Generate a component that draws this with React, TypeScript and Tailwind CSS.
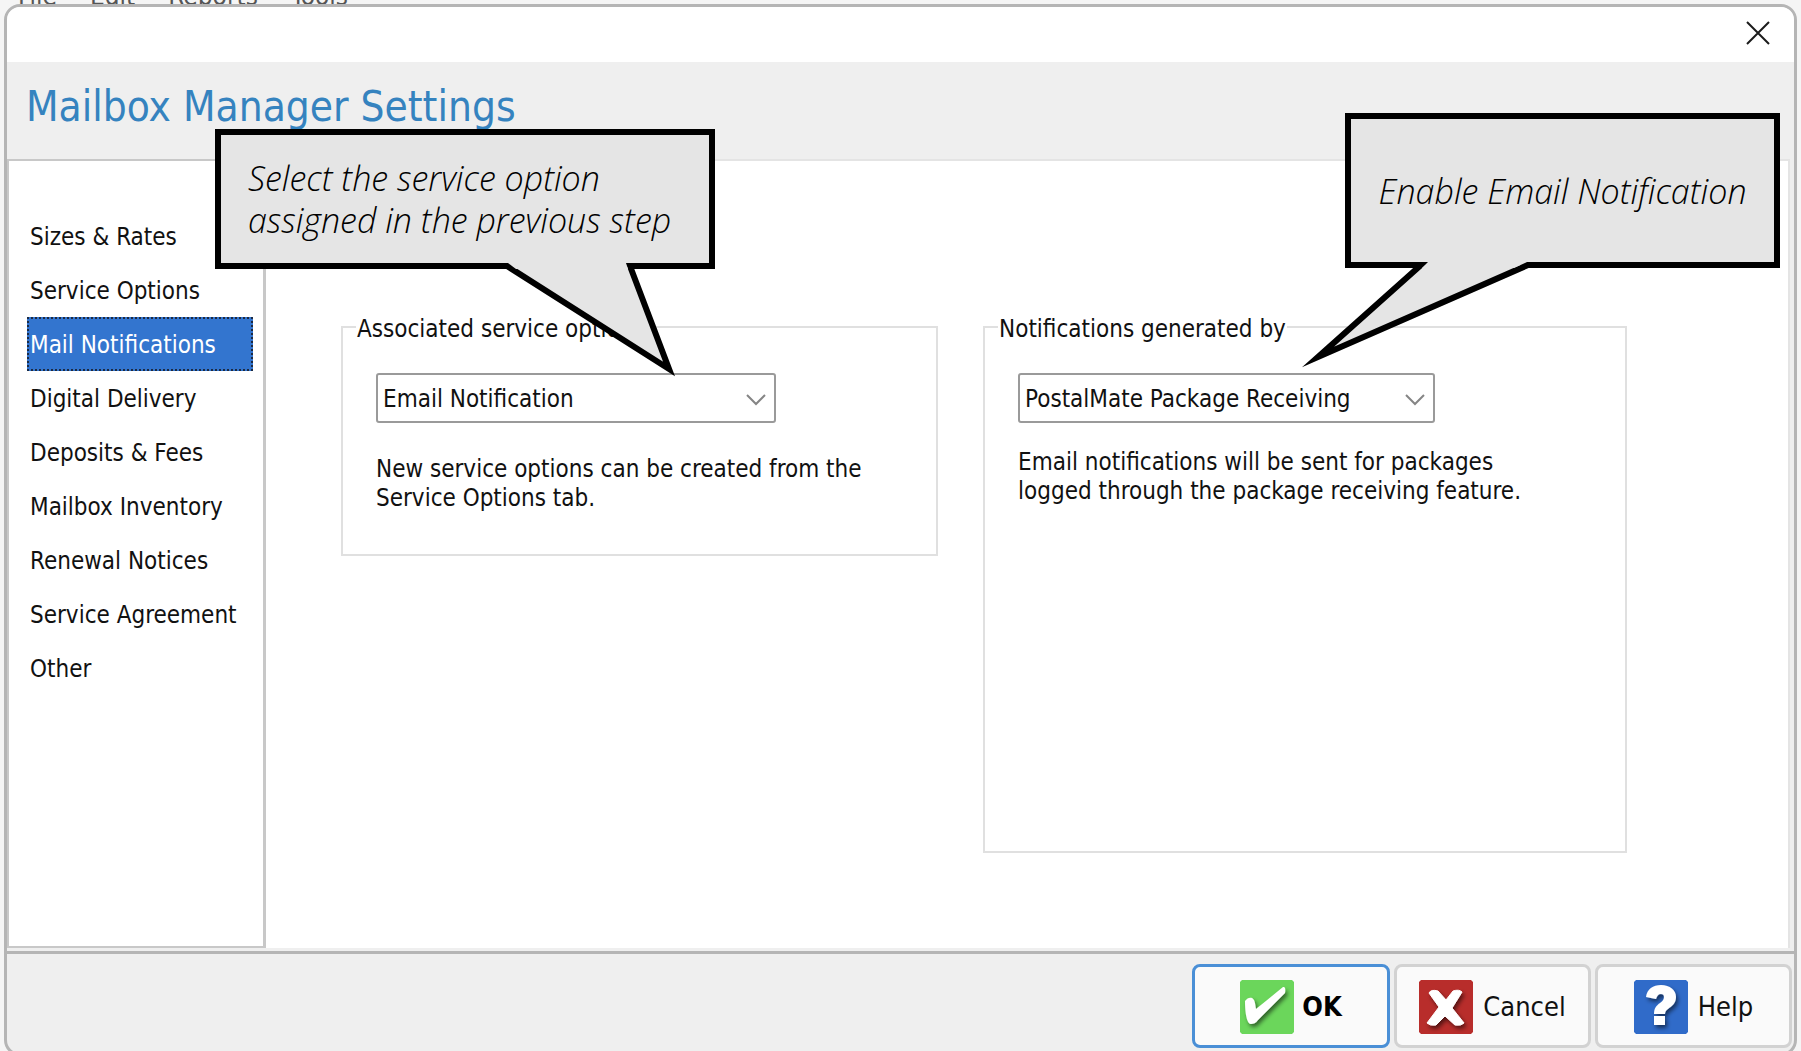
import { useState } from "react";
import type { ReactNode } from "react";

const NAV_ITEMS = [
  "Sizes & Rates",
  "Service Options",
  "Mail Notifications",
  "Digital Delivery",
  "Deposits & Fees",
  "Mailbox Inventory",
  "Renewal Notices",
  "Service Agreement",
  "Other",
];

function OkIcon() {
  return (
    <svg width="54" height="54" viewBox="0 0 54 54" aria-hidden="true" className="shrink-0">
      <defs>
        <filter id="icon-shadow" x="-20%" y="-20%" width="150%" height="150%">
          <feDropShadow dx="2" dy="3" stdDeviation="2" floodColor="#000" floodOpacity="0.55" />
        </filter>
      </defs>
      <path d="M2 0h50l2 2v50l-2 2H2l-2-2V2z" fill="#6bd65b" />
      <path
        d="M5 21c2-3 5-4 7-3 3 2 3 5 4 11L43 7q3-1 2 6L18 40c-2 3-5 4-7 4-4 0-6-10-6-23z"
        fill="#fff"
        filter="url(#icon-shadow)"
      />
    </svg>
  );
}

function CancelIcon() {
  return (
    <svg width="54" height="54" viewBox="0 0 54 54" aria-hidden="true" className="shrink-0">
      <path d="M2 0h50l2 2v50l-2 2H2l-2-2V2z" fill="#b82d2b" />
      <path
        d="M10 13q2-4 9-2l8 9 7-9q6-2 9 1l-10 16 12 15q-3 3-9 2L26 36l-9 9q-6 1-9-2l12-16z"
        fill="#fff"
        stroke="#fff"
        strokeLinejoin="round"
        filter="url(#icon-shadow)"
      />
    </svg>
  );
}

function HelpIcon() {
  return (
    <svg width="54" height="54" viewBox="0 0 54 54" aria-hidden="true" className="shrink-0">
      <path d="M2 0h50l2 2v50l-2 2H2l-2-2V2z" fill="#306bc9" />
      <g filter="url(#icon-shadow)" fill="#fff">
        <path d="M12 17C13 9 19 5 27 5c9 0 15 5 15 12 0 6-4 9-8 12-2 1-3 3-3 5H20c0-6 2-8 6-11 3-2 4-4 4-6s-1-3-3-3c-3 0-4 2-5 5z" />
        <path d="M20 36h11v9H20z" />
      </g>
    </svg>
  );
}

type ComboProps = {
  labelledBy: string;
  width: string;
  options: string[];
};

function Combo({ labelledBy, width, options }: ComboProps) {
  return (
    <div className={`relative ${width}`}>
      <select
        aria-labelledby={labelledBy}
        className="h-[50px] w-full appearance-none rounded-[3px] border-2 border-[#9a9a9a] bg-white pt-0.5 pr-12 pl-[5px] text-[#111]"
      >
        {options.map((option) => (
          <option key={option}>{option}</option>
        ))}
      </select>
      <svg
        viewBox="0 0 20 12"
        aria-hidden="true"
        className="pointer-events-none absolute top-[21px] right-[10px] h-3 w-5"
      >
        <path d="M1 1l9 9 9-9" fill="none" stroke="#858585" strokeWidth="2" />
      </svg>
    </div>
  );
}

type GroupProps = {
  id: string;
  title: string;
  className: string;
  children: ReactNode;
};

function Group({ id, title, className, children }: GroupProps) {
  return (
    <fieldset className={`border-2 border-[#e0e0e0] px-[33px] ${className}`}>
      <legend id={id} className="-ml-5 px-px pt-1 leading-7">
        {title}
      </legend>
      <div className="pt-[30px]">{children}</div>
    </fieldset>
  );
}

const calloutText =
  "border-[6px] border-black bg-[#e5e5e5] font-['Open_Sans',sans-serif] text-[34px] font-light leading-[42px] text-black italic";

export default function App() {
  const [active, setActive] = useState("Mail Notifications");

  return (
    <div className="h-screen overflow-hidden bg-[#f5f5f5] px-1 font-['DejaVu_Sans_Condensed','DejaVu_Sans',sans-serif] text-[24px] text-[#111]">
      <div className="flex h-1 items-end gap-[33px] overflow-hidden pl-[14px] text-[26px] leading-4 text-[#555]">
        <span>File</span>
        <span>Edit</span>
        <span>Reports</span>
        <span>Tools</span>
      </div>

      <main className="flex h-[calc(100vh+1px)] flex-col overflow-hidden rounded-[16px] border-[3px] border-[#b5b5b5] bg-[#efefef]">
        <div className="flex h-[55px] shrink-0 items-center justify-end bg-white pr-5 pb-1">
          <button type="button" aria-label="Close" className="p-1">
            <svg width="24" height="24" viewBox="0 0 24 24" aria-hidden="true">
              <path d="M1 1l22 22M23 1L1 23" fill="none" stroke="#1b1b1b" strokeWidth="2" />
            </svg>
          </button>
        </div>

        <header className="flex h-[97px] shrink-0 items-center pb-2 pl-[19px]">
          <h1 className="text-[42px] text-[#3583bf]">Mailbox Manager Settings</h1>
        </header>

        <div className="mb-[3px] flex min-h-0 flex-1">
          <nav
            aria-label="Settings sections"
            className="w-[259px] shrink-0 border-2 border-r-[3px] border-[#c8c8c8] bg-white pt-12 pr-[10px] pl-[18px]"
          >
            <ul>
              {NAV_ITEMS.map((item) => (
                <li key={item}>
                  <button
                    type="button"
                    onClick={() => setActive(item)}
                    aria-current={item === active ? "page" : undefined}
                    className={
                      item === active
                        ? "block h-[54px] w-full border-2 border-dotted border-[#1b2a44] bg-[#3375cf] pt-0.5 pl-px text-left whitespace-nowrap text-white"
                        : "block h-[54px] w-full border-2 border-transparent pt-0.5 pl-px text-left whitespace-nowrap"
                    }
                  >
                    {item}
                  </button>
                </li>
              ))}
            </ul>
          </nav>

          <section
            aria-label="Mail Notifications"
            className="mr-1 flex flex-1 items-start gap-[45px] border-t-2 border-r-2 border-[#e4e4e4] bg-white pt-[150px] pr-[161px] pl-[75px]"
          >
            <div className="relative min-w-0 flex-[598]">
              <Group id="service-option" title="Associated service option" className="h-[245px]">
                <Combo
                  labelledBy="service-option"
                  width="w-[400px]"
                  options={["Email Notification", "Text Notification"]}
                />
                <p className="mt-8 leading-[29px]">
                  New service options can be created from the Service Options tab.
                </p>
              </Group>
              <div className="absolute -top-[182px] -left-[126px] w-[500px]">
                <p className={`${calloutText} flex h-[140px] items-center pr-4 pl-[27px]`}>
                  Select the service option assigned in the previous step
                </p>
                <svg
                  width="220"
                  height="130"
                  viewBox="0 0 220 130"
                  aria-hidden="true"
                  className="absolute top-[134px] left-[270px]"
                >
                  <path
                    d="M10 3H22L184 106 145 3H160"
                    fill="#e5e5e5"
                    stroke="#000"
                    strokeWidth="6"
                    strokeMiterlimit="20"
                  />
                  <path d="M23 0H141L143 6H31z" fill="#e5e5e5" />
                </svg>
              </div>
            </div>

            <div className="relative min-w-0 flex-[645]">
              <Group id="generated-by" title="Notifications generated by" className="h-[542px]">
                <Combo
                  labelledBy="generated-by"
                  width="w-[417px]"
                  options={["PostalMate Package Receiving", "Manual Entry"]}
                />
                <p className="mt-[25px] max-w-[520px] leading-[29px]">
                  Email notifications will be sent for packages logged through the package receiving feature.
                </p>
              </Group>
              <div className="absolute -top-[198px] left-[362px] w-[435px]">
                <p className={`${calloutText} flex h-[155px] items-center justify-center whitespace-nowrap`}>
                  Enable Email Notification
                </p>
                <svg
                  width="250"
                  height="120"
                  viewBox="0 0 250 120"
                  aria-hidden="true"
                  className="absolute top-[149px] -left-[45px]"
                >
                  <path
                    d="M100 3H121L18 95 228 3H240"
                    fill="#e5e5e5"
                    stroke="#000"
                    strokeWidth="6"
                    strokeMiterlimit="20"
                  />
                  <path d="M128 0H227L214 6H122z" fill="#e5e5e5" />
                </svg>
              </div>
            </div>
          </section>
        </div>

        <footer className="flex shrink-0 items-start justify-end gap-1 border-t-[3px] border-[#b5b5b5] pt-[10px] pr-[2px] pb-[5px] text-[27px]">
          <button
            type="button"
            className="flex h-[84px] w-[198px] items-center justify-center gap-2 rounded-lg border-[3px] border-[#4a8fd6] bg-[#fafafa] pt-0.5 font-bold text-black"
          >
            <OkIcon />
            OK
          </button>
          <button
            type="button"
            className="flex h-[84px] w-[197px] items-center justify-center gap-[10px] rounded-lg border-[3px] border-[#d2d2d2] bg-[#fafafa] pt-0.5"
          >
            <CancelIcon />
            Cancel
          </button>
          <button
            type="button"
            className="flex h-[84px] w-[197px] items-center justify-center gap-[10px] rounded-lg border-[3px] border-[#d2d2d2] bg-[#fafafa] pt-0.5"
          >
            <HelpIcon />
            Help
          </button>
        </footer>
      </main>
    </div>
  );
}
